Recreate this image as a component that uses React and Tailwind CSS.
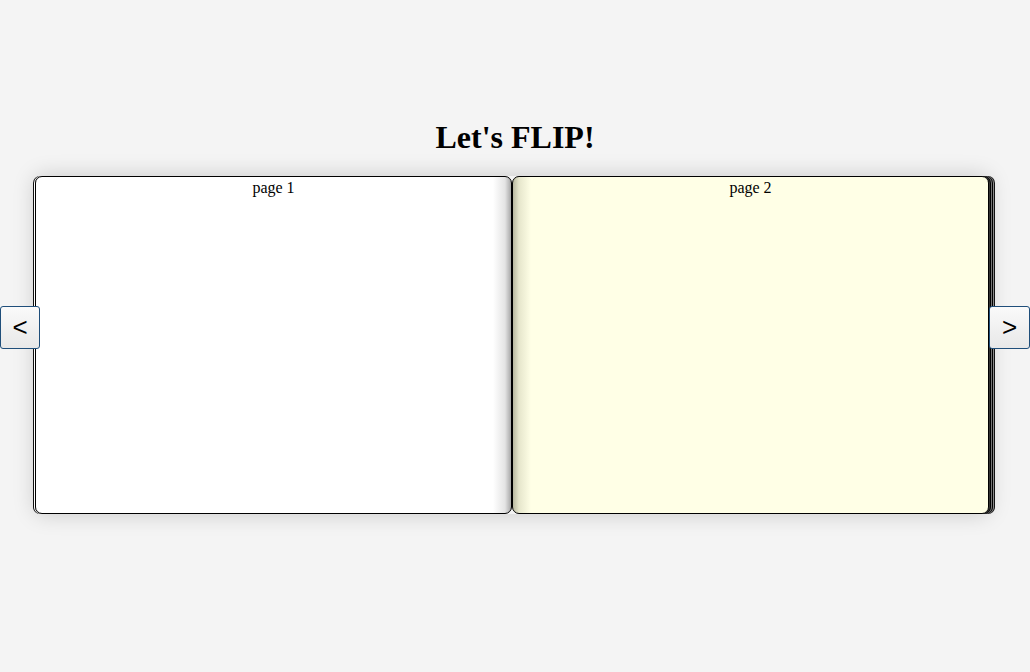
export default function App() {
  return (
    <div className="relative h-[672px] w-full overflow-hidden bg-[#f4f4f4] pt-[119px]" style={{ fontFamily: '"Liberation Serif", serif' }}>
      <h1 className="m-0 h-[36px] text-center text-[32px] font-bold leading-[36px] text-black" style={{ fontFamily: '"Liberation Serif", serif' }}>
        Let's FLIP!
      </h1>
      <div className="mt-[21px] flex justify-center">
        <div className="mr-[6px] flex h-[338px] w-[954px] rounded-[7px] shadow-[0_0_22px_rgba(0,0,0,0.18)]">
          <div className="flex h-full w-[477px] justify-center rounded-[7px] border border-black bg-[linear-gradient(to_left,#a8a8a8,#e4e4e4_6px,#ffffff_18px)] pt-[2px] shadow-[-1px_0_0_#ffffff,-2px_0_0_#111111] text-[16px] leading-[18px] text-black">
            <span>page 1</span>
          </div>
          <div className="flex h-full w-[477px] justify-center rounded-[7px] border border-black bg-[linear-gradient(to_right,#b8b8a0,#e6e6cc_6px,#ffffe6_18px)] pt-[2px] shadow-[1px_0_0_#333333,2px_0_0_#000000,3px_0_0_#777777,4px_0_0_#000000,5px_0_0_#888888,6px_0_0_#111111] text-[16px] leading-[18px] text-black">
            <span>page 2</span>
          </div>
        </div>
      </div>
      <button className="absolute left-0 top-[306px] flex h-[43px] w-[40px] items-center justify-center rounded-[3px] border border-[#1f4e7a] bg-[linear-gradient(to_bottom,#fafafa,#e8e8e8)] pb-[2px] text-[26px] leading-none text-black" style={{ fontFamily: '"Liberation Sans", sans-serif' }}>
        &lt;
      </button>
      <button className="absolute right-0 top-[306px] flex h-[43px] w-[41px] items-center justify-center rounded-[3px] border border-[#1f4e7a] bg-[linear-gradient(to_bottom,#fafafa,#e8e8e8)] pb-[2px] text-[26px] leading-none text-black" style={{ fontFamily: '"Liberation Sans", sans-serif' }}>
        &gt;
      </button>
    </div>
  );
}
